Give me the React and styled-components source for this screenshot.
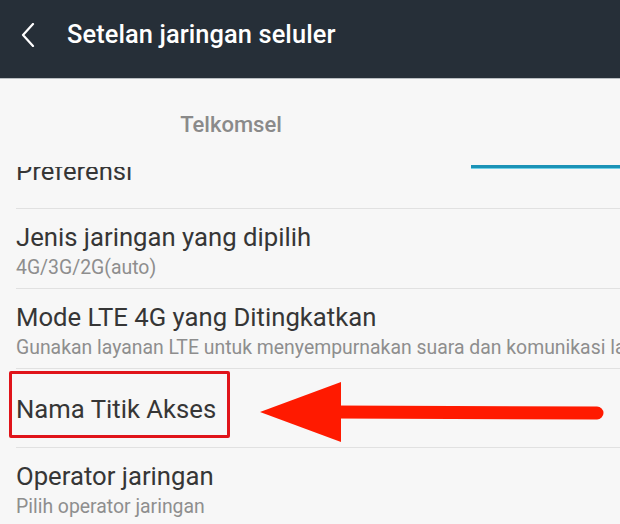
import React from 'react';
import styled, { createGlobalStyle } from 'styled-components';

const rows = [
  { title: 'Jenis jaringan yang dipilih', subtitle: '4G/3G/2G(auto)' },
  { title: 'Mode LTE 4G yang Ditingkatkan', subtitle: 'Gunakan layanan LTE untuk menyempurnakan suara dan komunikasi lainnya' },
];

const App = () => {
  return (
    <Screen>
      <GlobalStyle />
      <Header>
        <BackButton aria-label="Kembali">
          <svg width="16" height="24" viewBox="0 0 16 24">
            <path d="M13 1 L3 12 L13 23" fill="none" stroke="#ffffff" strokeWidth="2.2" strokeLinecap="round" strokeLinejoin="round" />
          </svg>
        </BackButton>
        <HeaderTitle>Setelan jaringan seluler</HeaderTitle>
      </Header>

      <TabBar>
        <Tab>Telkomsel</Tab>
        <Tab />
        <Indicator />
      </TabBar>

      <List>
        <Row $single $scrolled>
          <Title>Preferensi</Title>
        </Row>
        {rows.map((row) => (
          <Row key={row.title}>
            <Title>{row.title}</Title>
            <Subtitle>{row.subtitle}</Subtitle>
          </Row>
        ))}
        <Row $single $annotated>
          <Highlight>
            <Title>Nama Titik Akses</Title>
          </Highlight>
          <Arrow width="355" height="65" viewBox="0 0 355 65">
            <line x1="80" y1="32" x2="342" y2="33" stroke="#ff1a00" strokeWidth="13" strokeLinecap="round" />
            <polygon points="5,32 86,2 86,62" fill="#ff1a00" />
          </Arrow>
        </Row>
        <Row>
          <Title>Operator jaringan</Title>
          <Subtitle>Pilih operator jaringan</Subtitle>
        </Row>
      </List>
    </Screen>
  );
};

const GlobalStyle = createGlobalStyle`
  html, body {
    margin: 0;
    padding: 0;
    background: #f7f7f7;
  }
  * {
    box-sizing: border-box;
  }
`;

const Screen = styled.div`
  width: 620px;
  height: 524px;
  overflow: hidden;
  background: #f7f7f7;
  font-family: Roboto, "Liberation Sans", sans-serif;
  display: flex;
  flex-direction: column;
`;

const Header = styled.div`
  height: 79px;
  flex-shrink: 0;
  background: #262f38;
  border-bottom: 1px solid #b9bec2;
  display: flex;
  align-items: center;
  padding-left: 20px;
  padding-bottom: 10px;
`;

const BackButton = styled.div`
  width: 16px;
  height: 24px;
  display: flex;
  margin-right: 31px;
  margin-top: 2px;
`;

const HeaderTitle = styled.h1`
  margin: 0;
  color: #ffffff;
  font-size: 25.4px;
  font-weight: 500;
  letter-spacing: 0.1px;
`;

const TabBar = styled.div`
  position: relative;
  height: 88px;
  flex-shrink: 0;
  display: flex;
  z-index: 1;
`;

const Tab = styled.div`
  width: 462px;
  padding-top: 33px;
  text-align: center;
  color: #8a8a8a;
  font-size: 22px;
  font-weight: 500;
  line-height: 26px;

  &:empty {
    width: auto;
    flex: 1;
  }
`;

const Indicator = styled.div`
  position: absolute;
  left: 471px;
  right: 0;
  top: 86px;
  height: 4px;
  background: #1b93b7;
  border-bottom: 1px solid #73d2e8;
`;

const List = styled.div`
  flex: 1;
  overflow: hidden;
`;

const Row = styled.div`
  position: relative;
  margin-left: 16px;
  height: ${(p) => (p.$single ? '79px' : '80px')};
  padding-top: ${(p) => (p.$single ? (p.$annotated ? '2px' : '26px') : '13px')};
  margin-top: ${(p) => (p.$scrolled ? '-37px' : '0')};
  border-bottom: 1px solid #e1e1e1;
  white-space: nowrap;
  overflow: visible;
`;

const Title = styled.div`
  color: #363636;
  font-size: 25.7px;
  line-height: 31px;
`;

const Subtitle = styled.div`
  margin-top: 3px;
  color: #8e8e8e;
  font-size: 19.4px;
  line-height: 23px;
`;

const Highlight = styled.div`
  display: inline-block;
  width: 221px;
  height: 67px;
  margin-left: -7px;
  padding: 20px 0 0 4px;
  border: 3px solid #e0141a;
  border-radius: 2px;
`;

const Arrow = styled.svg`
  position: absolute;
  left: 239px;
  top: 11px;
`;

export default App;
